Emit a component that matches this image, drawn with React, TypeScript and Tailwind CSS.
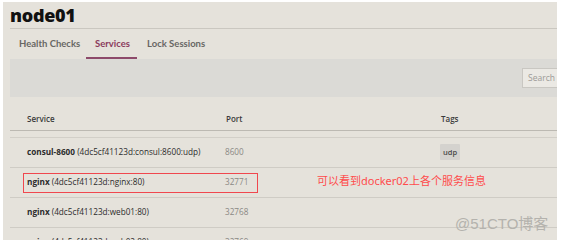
import React from "react";

const rows = [
  { name: "consul-8600", id: "(4dc5cf41123d:consul:8600:udp)", port: "8600", tags: ["udp"] },
  { name: "nginx", id: "(4dc5cf41123d:nginx:80)", port: "32771", tags: [], marked: true },
  { name: "nginx", id: "(4dc5cf41123d:web01:80)", port: "32768", tags: [] },
  { name: "nginx", id: "(4dc5cf41123d:web02:80)", port: "32769", tags: [] },
];

export default function App() {
  return (
    <div className="h-[244px] w-[563px] overflow-hidden bg-white pl-[3px] pt-[2px]">
      <div
        className="relative h-[238px] w-[554px] overflow-hidden bg-[#e5e2db] pl-[7px] text-[#2b2b2b]"
        style={{ fontFamily: "'Open Sans', 'Noto Sans', sans-serif" }}
      >
        {/* title */}
        <div className="flex h-[27px] items-center border-b border-[#cac7c0]">
          <h1 className="text-[18px] font-extrabold leading-none tracking-[-0.3px] text-[#111]">node01</h1>
        </div>

        {/* tabs */}
        <div
          className="flex h-[30px] items-stretch text-[9.5px] font-bold text-[#686764]"
          style={{ fontFamily: "'Lato', 'Open Sans', sans-serif" }}
        >
          <div className="flex w-[76px] items-center whitespace-nowrap pl-[9px]">Health Checks</div>
          <div className="flex w-[51px] items-center whitespace-nowrap border-b-[2px] border-[#8d4a6a] pl-[9px] pt-[2px] text-[#8a3a5c]">
            Services
          </div>
          <div className="flex items-center whitespace-nowrap pl-[10px]">Lock Sessions</div>
        </div>

        {/* filter band */}
        <div className="flex h-[38px] items-center justify-end bg-[#dbdad6]">
          <div className="-mr-[20px] flex h-[20px] w-[55px] items-center overflow-hidden whitespace-nowrap border border-[#c9c7c2] bg-[#ebe9e4] pl-[5px] text-[8.5px] text-[#9c9a96]">
            Search by name
          </div>
        </div>

        {/* table header */}
        <div className="flex h-[34px] items-end border-b border-[#bcb9b2] pb-[5px] text-[8px] font-semibold text-[#3a3a3a]">
          <div className="w-[199px] pl-[17px]">Service</div>
          <div className="w-[215px] pl-[17px]">Port</div>
          <div className="pl-[17px]">Tags</div>
        </div>
        <div className="h-[7px] border-b border-[#d2cfc8]" />

        {/* rows */}
        {rows.map((r, i) => (
          <div key={i} className="relative flex h-[30px] items-center border-b border-[#cfccc5] text-[8.2px]">
            <div className="w-[199px] whitespace-nowrap pl-[17px] text-[#2b2b2b]">
              <span className="font-bold">{r.name}</span> {r.id}
            </div>
            <div className="w-[215px] pl-[16px] text-[#8a8884]">{r.port}</div>
            <div className="pl-[16px]">
              {r.tags.map((t) => (
                <span key={t} className="rounded-[1px] bg-[#d4d2ce] px-[3px] py-[3px] text-[7.5px] font-semibold text-[#4a4a4a]">
                  {t}
                </span>
              ))}
            </div>
            {r.marked && (
              <>
                <div className="pointer-events-none absolute left-[13px] top-[5px] h-[20px] w-[235px] border-[1.5px] border-[#f0474e]" />
                <div
                  className="absolute left-[307px] top-[7px] whitespace-nowrap text-[11px] leading-none text-[#ff4b4b]"
                  style={{ fontFamily: "'Noto Sans', 'Noto Sans CJK SC', sans-serif" }}
                >
                  可以看到docker02上各个服务信息
                </div>
              </>
            )}
          </div>
        ))}

        {/* watermark */}
        <div
          className="pointer-events-none absolute left-[452px] top-[214px] whitespace-nowrap text-[15px] leading-none text-[#b4b2ad]"
          style={{ fontFamily: "'Liberation Sans', 'Noto Sans CJK SC', sans-serif" }}
        >
          @51CTO博客
        </div>
      </div>
    </div>
  );
}
